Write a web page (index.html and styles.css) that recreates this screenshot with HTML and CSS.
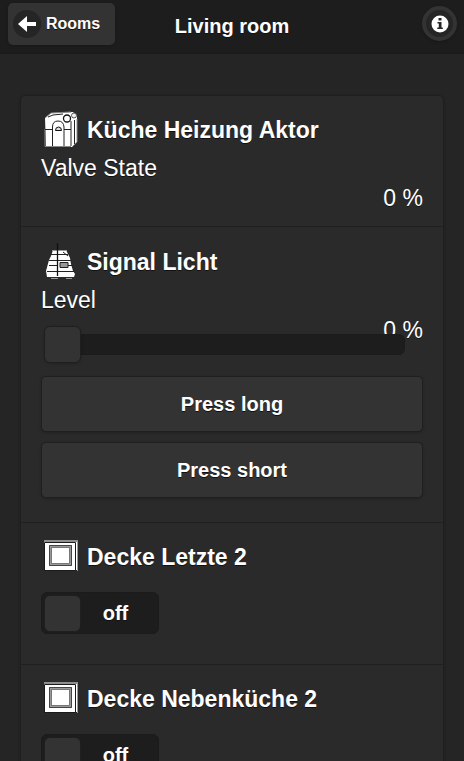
FILE: index.html
```html
<!DOCTYPE html>
<html lang="en">
<head>
<meta charset="utf-8">
<meta name="viewport" content="width=device-width, initial-scale=1">
<title>Living room</title>
<link rel="stylesheet" href="styles.css">
</head>
<body>
<svg class="sprite" aria-hidden="true">
  <symbol id="frame" viewBox="0 0 36 38">
    <path fill="#fff" d="M1 3h33v29H1z"/>
    <path fill="#8e8e8e" d="M1 2h34v2H1z"/>
    <path fill="none" stroke="#1a1a1a" d="M1.500 4.500h31v28h-31z"/>
    <path fill="none" stroke="#999" d="M34.500 3v30"/>
    <path fill="#999" d="M6 7h23v21H6z"/>
    <path fill="none" stroke="#444" d="M6.500 7.500h22v20h-22z"/>
    <path fill="none" stroke="#777" d="M8.500 9.500h18v16h-18z"/>
    <path fill="#fff" d="M9 10h17v15H9z"/>
  </symbol>
</svg>
<div class="app">
  <header class="header">
    <a class="back" href="#rooms">
      <svg class="back-icon" viewBox="0 0 28 28" aria-hidden="true"><circle cx="14" cy="14" r="14" fill="#252525"/><path fill="#fff" d="M5 14l9-8v6h9v4h-9v6z"/></svg>
      Rooms
    </a>
    <h1 class="heading">Living room</h1>
    <button class="info" type="button" aria-label="Info">
      <svg viewBox="0 0 18 18" aria-hidden="true"><circle cx="9" cy="9" r="8.500" fill="#fff"/><path fill="#252525" d="M7.500 3h3v2.500h-3zM6.500 7h4v5.500h1.300V14H6.300v-1.500h1.500v-4H6.500z"/></svg>
    </button>
  </header>
  <main class="main">
    <ul class="list">
      <li class="item item-value">
        <h2 class="title">
          <svg class="icon" viewBox="0 0 36 38" aria-hidden="true">
            <path fill="#fff" d="M2 7l6-5 22-1 4 4v26l-5 5H3z"/>
            <path fill="none" stroke="#888" d="M2 7l6-5 20-1M2 18v17.500h26M34 8v23l-4 4"/>
            <path fill="none" stroke="#222" d="M5 6l5-2 10-1M2 18.500h8M21 18.500h7M9.500 35V16q0-6 5.500-6t6 6v19M28 10v25M31.500 9v24"/>
            <circle cx="24" cy="7.500" r="3.500" fill="#fff" stroke="#111" stroke-width="1.300"/>
            <circle cx="31" cy="4.500" r="2.500" fill="#eee" stroke="#555"/>
            <path fill="#ddd" stroke="#111" d="M12.500 19.500q0-3.500 3-3.500t3 3.500z"/>
          </svg>
          Küche Heizung Aktor
        </h2>
        <p class="line">Valve State</p>
        <p class="line value">0 %</p>
      </li>
      <li class="item item-actions">
        <h2 class="title">
          <svg class="icon" viewBox="0 0 36 38" aria-hidden="true">
            <path fill="#fff" d="M10 7h13l4 8 1 6 2 7 2 3-1 3H4l-1-6 3-11 2-4z"/>
            <path fill="none" stroke="#999" d="M9 7.500h15M8 35.500h7M23 35.500h6"/>
            <path fill="none" stroke="#222" d="M8 11.500h17M6 17.500h22M6 22.500h9M25 22.500h5M4 28.500h27M20 9l5 4"/>
            <path fill="none" stroke="#111" stroke-width="1.300" d="M14.500 0v33"/>
            <path fill="#999" stroke="#222" d="M17 19.500h8v5h-8z"/>
          </svg>
          Signal Licht
        </h2>
        <p class="line"><label for="level">Level</label></p>
        <p class="line value">0 %</p>
        <input class="slider" id="level" type="range" min="0" max="100" value="0">
        <div class="actions">
          <button class="button" type="button">Press long</button>
          <button class="button" type="button">Press short</button>
        </div>
      </li>
      <li class="item item-switch">
        <h2 class="title"><svg class="icon" aria-hidden="true"><use href="#frame"/></svg>Decke Letzte 2</h2>
        <label class="switch"><input type="checkbox"><span class="state">off</span></label>
      </li>
      <li class="item item-switch">
        <h2 class="title"><svg class="icon" aria-hidden="true"><use href="#frame"/></svg>Decke Nebenküche 2</h2>
        <label class="switch"><input type="checkbox"><span class="state">off</span></label>
      </li>
    </ul>
  </main>
</div>
</body>
</html>
```

FILE: styles.css
```css
* {
  box-sizing: border-box;
}

body {
  margin: 0;
  background: #252525;
  color: #fff;
  font-family: "Liberation Sans", Arial, sans-serif;
  text-shadow: 0 1px 0 #111;
}

.sprite {
  display: none;
}

.app {
  display: flex;
  flex-direction: column;
  height: 100vh;
}

.header {
  display: grid;
  grid-template-columns: 1fr auto 1fr;
  align-items: start;
  padding: 3px 8px 4px;
  background: #1d1d1d;
  border-bottom: 1px solid #1b1b1b;
}

.back {
  display: flex;
  align-items: center;
  justify-self: start;
  gap: 5px;
  height: 42px;
  padding: 0 15px 0 5px;
  border-radius: 5px;
  background: #333;
  box-shadow: 0 1px 3px rgba(0, 0, 0, 0.2);
  color: #fff;
  font-size: 16px;
  font-weight: bold;
  text-decoration: none;
}

.back-icon {
  width: 28px;
  height: 28px;
}

.heading {
  margin: 0;
  font-size: 20px;
  line-height: 46px;
}

.info {
  display: flex;
  align-items: center;
  justify-content: center;
  justify-self: end;
  width: 35px;
  height: 35px;
  margin: 3px -1px 0 0;
  padding: 0;
  border: 4px solid #333;
  border-radius: 50%;
  background: #252525;
  box-shadow: 0 1px 3px rgba(0, 0, 0, 0.2);
}

.info svg {
  flex: none;
  width: 18px;
  height: 18px;
}

.main {
  flex: 1;
  min-height: 0;
  padding: 41px 20px 0;
  overflow-y: auto;
  scrollbar-width: none;
}

.list {
  margin: 0;
  padding: 0;
  border: 1px solid #1f1f1f;
  border-radius: 5px;
  background: #2a2a2a;
  box-shadow: 0 1px 3px rgba(0, 0, 0, 0.2);
  list-style: none;
}

.item {
  padding: 16px 20px 30px;
}

.item + .item {
  border-top: 1px solid #1f1f1f;
}

.item-value {
  padding-bottom: 13px;
}

.item-actions {
  padding-top: 17px;
  padding-bottom: 24px;
}

.title {
  display: flex;
  align-items: center;
  gap: 8px;
  height: 36px;
  margin: 0 0 5px;
  font-size: 23px;
  white-space: nowrap;
}

.item-switch .title {
  margin-bottom: 17px;
}

.icon {
  flex: none;
  width: 36px;
  height: 38px;
  margin-left: 2px;
}

.line {
  margin: 0;
  font-size: 23px;
  line-height: 30px;
}

.value {
  text-align: right;
}

.slider {
  appearance: none;
  display: block;
  position: relative;
  width: calc(100% - 21px);
  height: 37px;
  margin: -19px 18px 13px 3px;
  background: transparent;
}

.slider::-webkit-slider-runnable-track {
  height: 21px;
  border: 1px solid #1b1b1b;
  border-radius: 6px;
  background: #1d1d1d;
}

.slider::-webkit-slider-thumb {
  appearance: none;
  width: 37px;
  height: 37px;
  margin: -9px 0 0 -1px;
  border: 1px solid #1f1f1f;
  border-radius: 6px;
  background: #333;
  box-shadow: 0 1px 3px rgba(0, 0, 0, 0.2);
}

.actions {
  display: grid;
  gap: 10px;
}

.button {
  height: 56px;
  border: 1px solid #1f1f1f;
  border-radius: 5px;
  background: #333;
  box-shadow: 0 1px 3px rgba(0, 0, 0, 0.2);
  color: #fff;
  font: bold 20px "Liberation Sans", Arial, sans-serif;
  text-shadow: 0 1px 0 #111;
}

.switch {
  display: flex;
  align-items: center;
  width: 118px;
  height: 42px;
  padding: 0 2px;
  border: 1px solid #1b1b1b;
  border-radius: 6px;
  background: #1d1d1d;
  font-size: 20px;
  font-weight: bold;
}

.switch input {
  appearance: none;
  width: 37px;
  height: 37px;
  margin: 0;
  border: 1px solid #1f1f1f;
  border-radius: 6px;
  background: #333;
}

.state {
  flex: 1;
  padding-right: 6px;
  text-align: center;
}
```
